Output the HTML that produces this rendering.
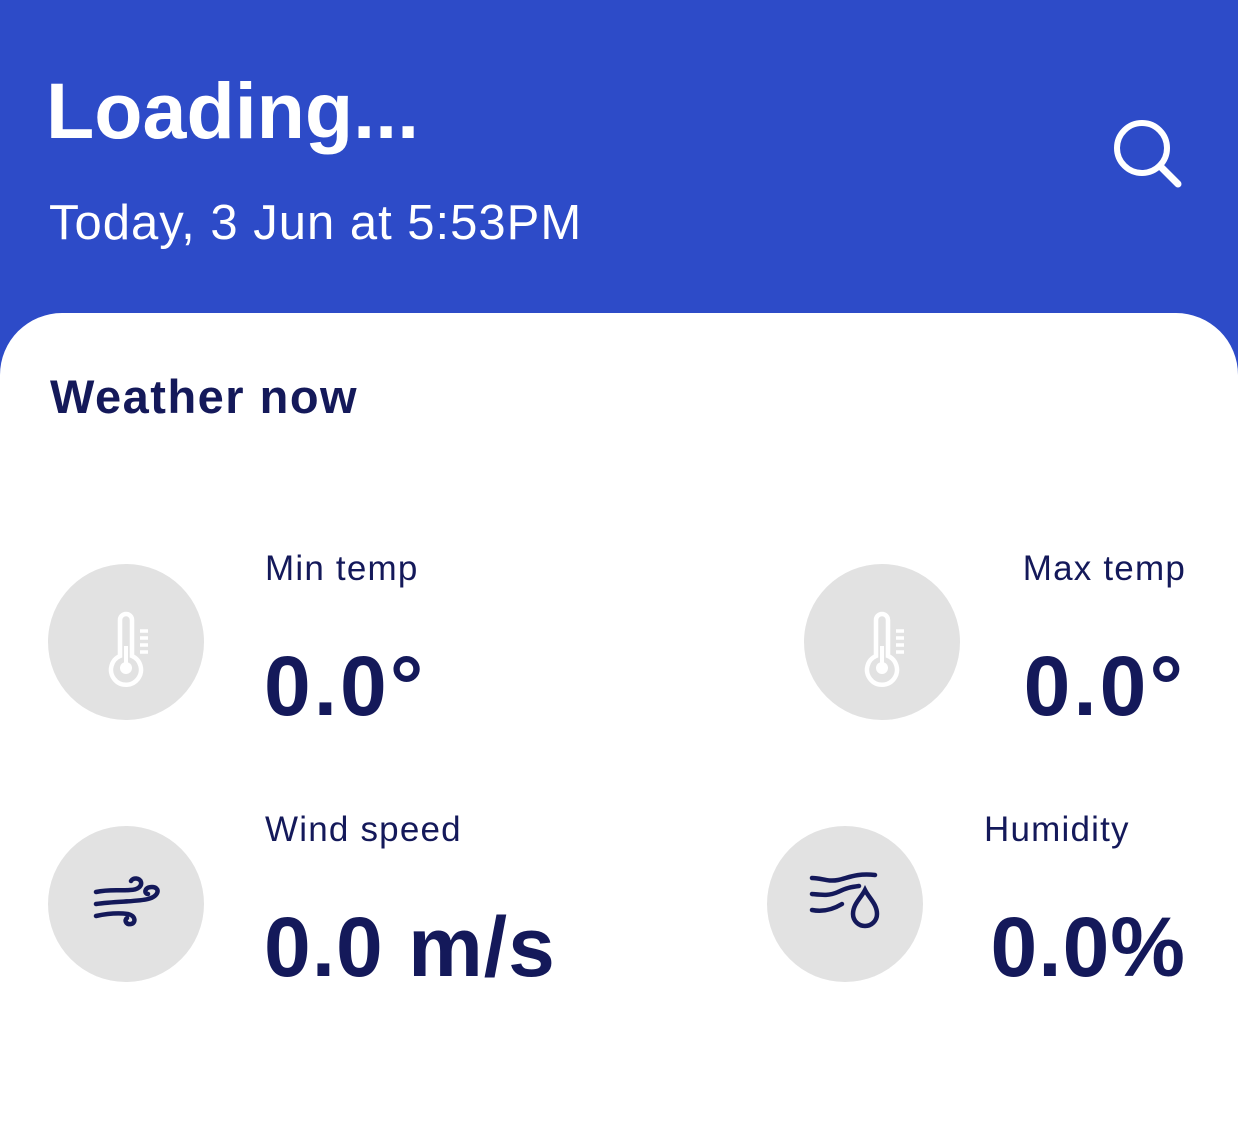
<!DOCTYPE html>
<html><head><meta charset="utf-8"><style>
*{margin:0;padding:0;box-sizing:border-box}
body{width:1238px;height:1112px;background:#fff;position:relative;overflow:hidden;font-family:"Liberation Sans",sans-serif}
.hdr{position:absolute;left:0;top:0;width:1238px;height:380px;background:#2d4bc8}
.card{position:absolute;left:0;top:313px;width:1238px;height:820px;background:#fff;border-radius:62px 62px 0 0}
.t{position:absolute;white-space:nowrap;line-height:1}
.navy{color:#14195a}
.lbl{font-size:35px;letter-spacing:1.2px}
.val{font-size:84px;font-weight:bold;letter-spacing:1px}
.circ{position:absolute;width:156px;height:156px;border-radius:50%;background:#e2e2e2}
.circ svg{position:absolute;left:0;top:0}
</style></head><body>
<div class="hdr"></div>
<div class="t" style="left:46px;top:71px;font-size:79px;font-weight:bold;color:#fff">Loading...</div>
<div class="t" style="left:49px;top:199px;font-size:49px;color:#fff;letter-spacing:1px">Today, 3 Jun at 5:53PM</div>
<svg style="position:absolute;left:1100px;top:105px" width="100" height="100" viewBox="1100 105 100 100"><circle cx="1142" cy="148" r="25" fill="none" stroke="#fff" stroke-width="6"/><line x1="1160" y1="166" x2="1178" y2="184" stroke="#fff" stroke-width="7" stroke-linecap="round"/></svg>
<div class="card"></div>
<div class="t navy" style="left:50px;top:373px;font-size:47px;font-weight:bold;letter-spacing:1.5px">Weather now</div>

<div class="circ" style="left:48px;top:564px"><svg width="156" height="156"><path d="M72 92V56a6 6 0 0 1 12 0V92a15 15 0 1 1-12 0z" fill="none" stroke="#fff" stroke-width="4.5"/><circle cx="78" cy="104" r="6" fill="#fff"/><line x1="78" y1="102" x2="78" y2="82" stroke="#fff" stroke-width="4"/><g stroke="#fff" stroke-width="3.5"><line x1="92" y1="67" x2="100" y2="67"/><line x1="92" y1="74" x2="100" y2="74"/><line x1="92" y1="81" x2="100" y2="81"/><line x1="92" y1="88" x2="100" y2="88"/></g></svg></div>
<div class="circ" style="left:804px;top:564px"><svg width="156" height="156"><path d="M72 92V56a6 6 0 0 1 12 0V92a15 15 0 1 1-12 0z" fill="none" stroke="#fff" stroke-width="4.5"/><circle cx="78" cy="104" r="6" fill="#fff"/><line x1="78" y1="102" x2="78" y2="82" stroke="#fff" stroke-width="4"/><g stroke="#fff" stroke-width="3.5"><line x1="92" y1="67" x2="100" y2="67"/><line x1="92" y1="74" x2="100" y2="74"/><line x1="92" y1="81" x2="100" y2="81"/><line x1="92" y1="88" x2="100" y2="88"/></g></svg></div>
<div class="circ" style="left:48px;top:826px"><svg width="156" height="156"><g fill="none" stroke="#14195a" stroke-width="4.5" stroke-linecap="round"><path d="M48 66C62 63 72 65 82 64c8 0 12-4 11-8s-8-5-10-1"/><path d="M48 78c20-3 40-2 52-5c12-3 12-12 4-12s-8 7-4 7"/><path d="M48 90c14-3 24-3 32-2c8 2 8 9 3 10s-7-4-4-6"/></g></svg></div>
<div class="circ" style="left:767px;top:826px"><svg width="156" height="156"><g fill="none" stroke="#14195a" stroke-width="4.5" stroke-linecap="round"><path d="M45 52c10 0 15 4 26 2c10-2 18-7 37-5"/><path d="M45 68c10 1 17 2 26-2c8-4 13-5 21-6"/><path d="M45 84c10 2 20 0 30-6"/><path d="M98 64c-4 8-12 14-12 24a12 12 0 0 0 24 0c0-10-8-16-12-24z"/></g></svg></div>

<div class="t navy lbl" style="left:265px;top:551px">Min temp</div>
<div class="t navy val" style="left:264px;top:644px;letter-spacing:3px">0.0°</div>
<div class="t navy lbl" style="right:52px;top:551px">Max temp</div>
<div class="t navy val" style="right:52px;top:644px;letter-spacing:3px">0.0°</div>
<div class="t navy lbl" style="left:265px;top:812px">Wind speed</div>
<div class="t navy val" style="left:264px;top:905px">0.0 m/s</div>
<div class="t navy lbl" style="left:984px;top:812px">Humidity</div>
<div class="t navy val" style="right:52px;top:905px">0.0%</div>
</body></html>
